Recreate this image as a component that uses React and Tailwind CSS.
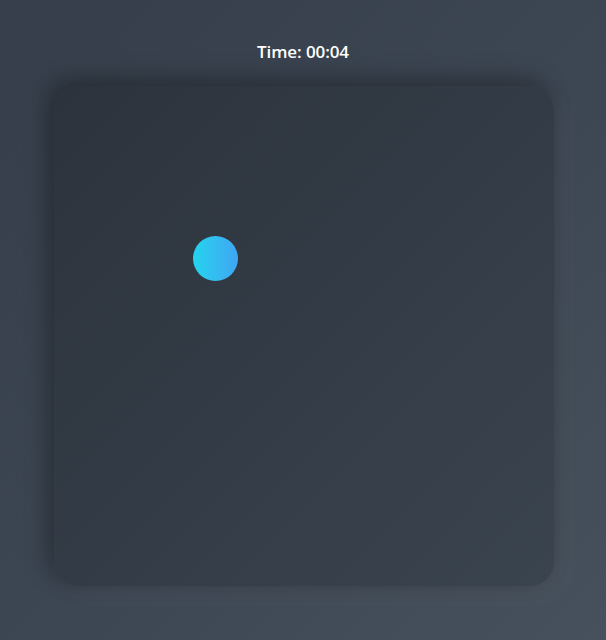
import React, { useState, useEffect } from "react";

const App = () => {
  const [seconds, setSeconds] = useState(4);

  useEffect(() => {
    setSeconds(4);
  }, []);

  const fmt = s => `${String(Math.floor(s / 60)).padStart(2, "0")}:${String(s % 60).padStart(2, "0")}`;

  return (
    <div className="min-h-[640px] w-full bg-gradient-to-br from-[#353e4a] via-[#3c4652] to-[#47515d] flex flex-col items-center pt-10 font-['Open_Sans',sans-serif]">
      <div className="text-white text-[17px] font-semibold leading-6 tracking-[-0.1px]">Time: {fmt(seconds)}</div>
      <div className="relative mt-[22px] ml-[2px] w-[500px] h-[500px] rounded-3xl bg-gradient-to-br from-[#2c333d] to-[#3a444f] shadow-[-8px_-8px_24px_rgba(0,0,0,0.22),8px_8px_24px_rgba(255,255,255,0.05),0_0_18px_rgba(0,0,0,0.2)]">
        {/* ball */}
        <div className="absolute left-[139px] top-[150px] w-[45px] h-[45px] rounded-full bg-gradient-to-r from-[#22d3ee] to-[#3fa6f3]" />
      </div>
    </div>
  );
};

export default App;
